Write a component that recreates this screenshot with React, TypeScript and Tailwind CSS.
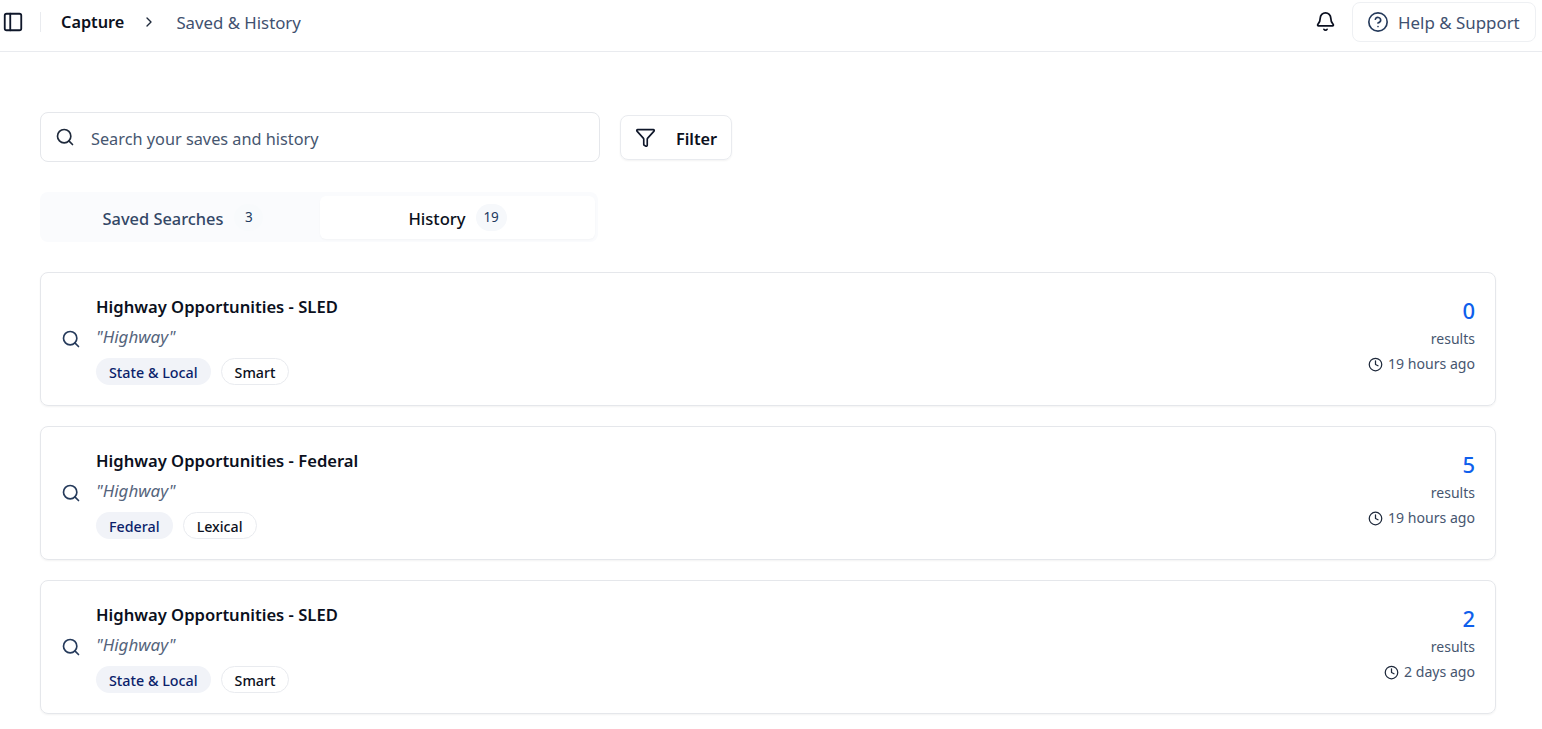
import { Bell, CircleHelp, ChevronRight, Clock, Funnel, PanelLeft, Search } from "lucide-react";

const items = [
  { title: "Highway Opportunities - SLED", a: "State & Local", b: "Smart", n: "0", t: "19 hours ago" },
  { title: "Highway Opportunities - Federal", a: "Federal", b: "Lexical", n: "5", t: "19 hours ago" },
  { title: "Highway Opportunities - SLED", a: "State & Local", b: "Smart", n: "2", t: "2 days ago" },
];

export default function App() {
  return (
    <div className="h-[729px] overflow-hidden bg-white font-['Noto_Sans','Open_Sans',sans-serif] text-[#334766]">
      <header className="flex h-[52px] items-center border-b border-[#e9ebef] pb-2 pl-[2px] pr-[6px]">
        <PanelLeft className="h-[22px] w-[22px] text-[#0f172a]" strokeWidth={2} />
        <div className="ml-[16px] h-[20px] w-px bg-[#e9ebef]" />
        <span className="ml-5 pt-[2px] text-[16.3px] font-semibold text-[#0b1020]">Capture</span>
        <ChevronRight className="ml-[17px] h-[16px] w-[16px] text-[#1e293b]" strokeWidth={2} />
        <span className="ml-[19px] pt-[2px] text-[16.8px] text-[#3f5170]">Saved &amp; History</span>
        <Bell className="ml-auto h-[21px] w-[21px] text-[#0b1020]" strokeWidth={2} />
        <div className="ml-[16px] flex h-[40px] w-[184px] items-center gap-[9px] rounded-lg border border-[#eef0f3] pl-[14px]">
          <CircleHelp className="h-[22px] w-[22px] text-[#253a5b]" strokeWidth={1.8} />
          <span className="pt-[2px] text-[16.9px] text-[#3f5170]">Help &amp; Support</span>
        </div>
      </header>

      <main className="pl-10 pr-[46px] pt-[60px]">
        <div className="flex items-center gap-5">
          <div className="flex h-[50px] w-[560px] items-center rounded-lg border border-[#e5e7eb] pl-[14px]">
            <Search className="h-[20px] w-[20px] text-[#1e293b]" strokeWidth={2} />
            <span className="ml-[16px] pt-[4px] text-[16.3px] text-[#46566f]">Search your saves and history</span>
          </div>
          <div className="flex h-[45px] w-[112px] items-center rounded-lg border border-[#e9ebef] pl-[14px] shadow-xs">
            <Funnel className="h-[21px] w-[21px] text-[#0f172a]" strokeWidth={1.9} />
            <span className="ml-[20px] pt-[4px] text-[16.3px] font-semibold text-[#0b1020]">Filter</span>
          </div>
        </div>

        <div className="mt-[30px] flex h-[50px] w-[558px] items-center gap-[5px] rounded-lg bg-[#fafbfd] px-[3px]">
          <div className="flex h-[43px] flex-1 items-center justify-center gap-[11px] pl-[8px]">
            <span className="pt-[4px] text-[16.4px] font-medium text-[#334766]">Saved Searches</span>
            <span className="flex h-[27px] w-[29px] items-center justify-center rounded-full bg-[#f8fafc] text-[13.5px] text-[#1e3a5f]">3</span>
          </div>
          <div className="flex h-[43px] w-[275px] items-center justify-center gap-[10px] rounded-md bg-white shadow-[0_1px_2px_rgba(0,0,0,0.03)]">
            <span className="pt-[4px] text-[16.6px] font-medium text-[#0b1020]">History</span>
            <span className="flex h-[27px] w-[31px] items-center justify-center rounded-full bg-[#f6f8fb] text-[13.5px] text-[#1e3a5f]">19</span>
          </div>
        </div>

        <div className="mt-[30px] flex flex-col gap-5">
          {items.map((it, i) => (
            <div key={i} className="flex h-[134px] items-center rounded-lg border border-[#e5e7eb] pl-5 pr-5 shadow-xs">
              <Search className="h-[20px] w-[20px] shrink-0 text-[#253a5b]" strokeWidth={2} />
              <div className="ml-[15px] flex flex-col items-start">
                <div className="pt-[1px] text-[16.6px] font-semibold leading-[24px] text-[#0b1020]">{it.title}</div>
                <div className="mt-[6px] text-[17px] italic leading-[24px] text-[#55647c]">"Highway"</div>
                <div className="mt-[9px] flex gap-[10px]">
                  <span className="flex h-[27px] items-center rounded-full bg-[#f1f3f8] px-[13px] pt-[4px] text-[14.3px] font-medium text-[#0b1f6b]">{it.a}</span>
                  <span className="flex h-[27px] items-center rounded-full border border-[#e9ebef] px-[13px] pt-[4px] text-[14.2px] font-medium text-[#0b1020]">{it.b}</span>
                </div>
              </div>
              <div className="ml-auto flex flex-col items-end pb-[7px]">
                <div className="text-[22px] font-medium leading-[26px] text-[#0f5fec]">{it.n}</div>
                <div className="mt-[6px] text-[14px] leading-[20px] text-[#46566f]">results</div>
                <div className="mt-[5px] flex items-center gap-[5px] text-[14.1px] leading-[20px] text-[#46566f]">
                  <Clock className="h-[15px] w-[15px] text-[#1e293b]" strokeWidth={2} />
                  {it.t}
                </div>
              </div>
            </div>
          ))}
        </div>
      </main>
    </div>
  );
}
